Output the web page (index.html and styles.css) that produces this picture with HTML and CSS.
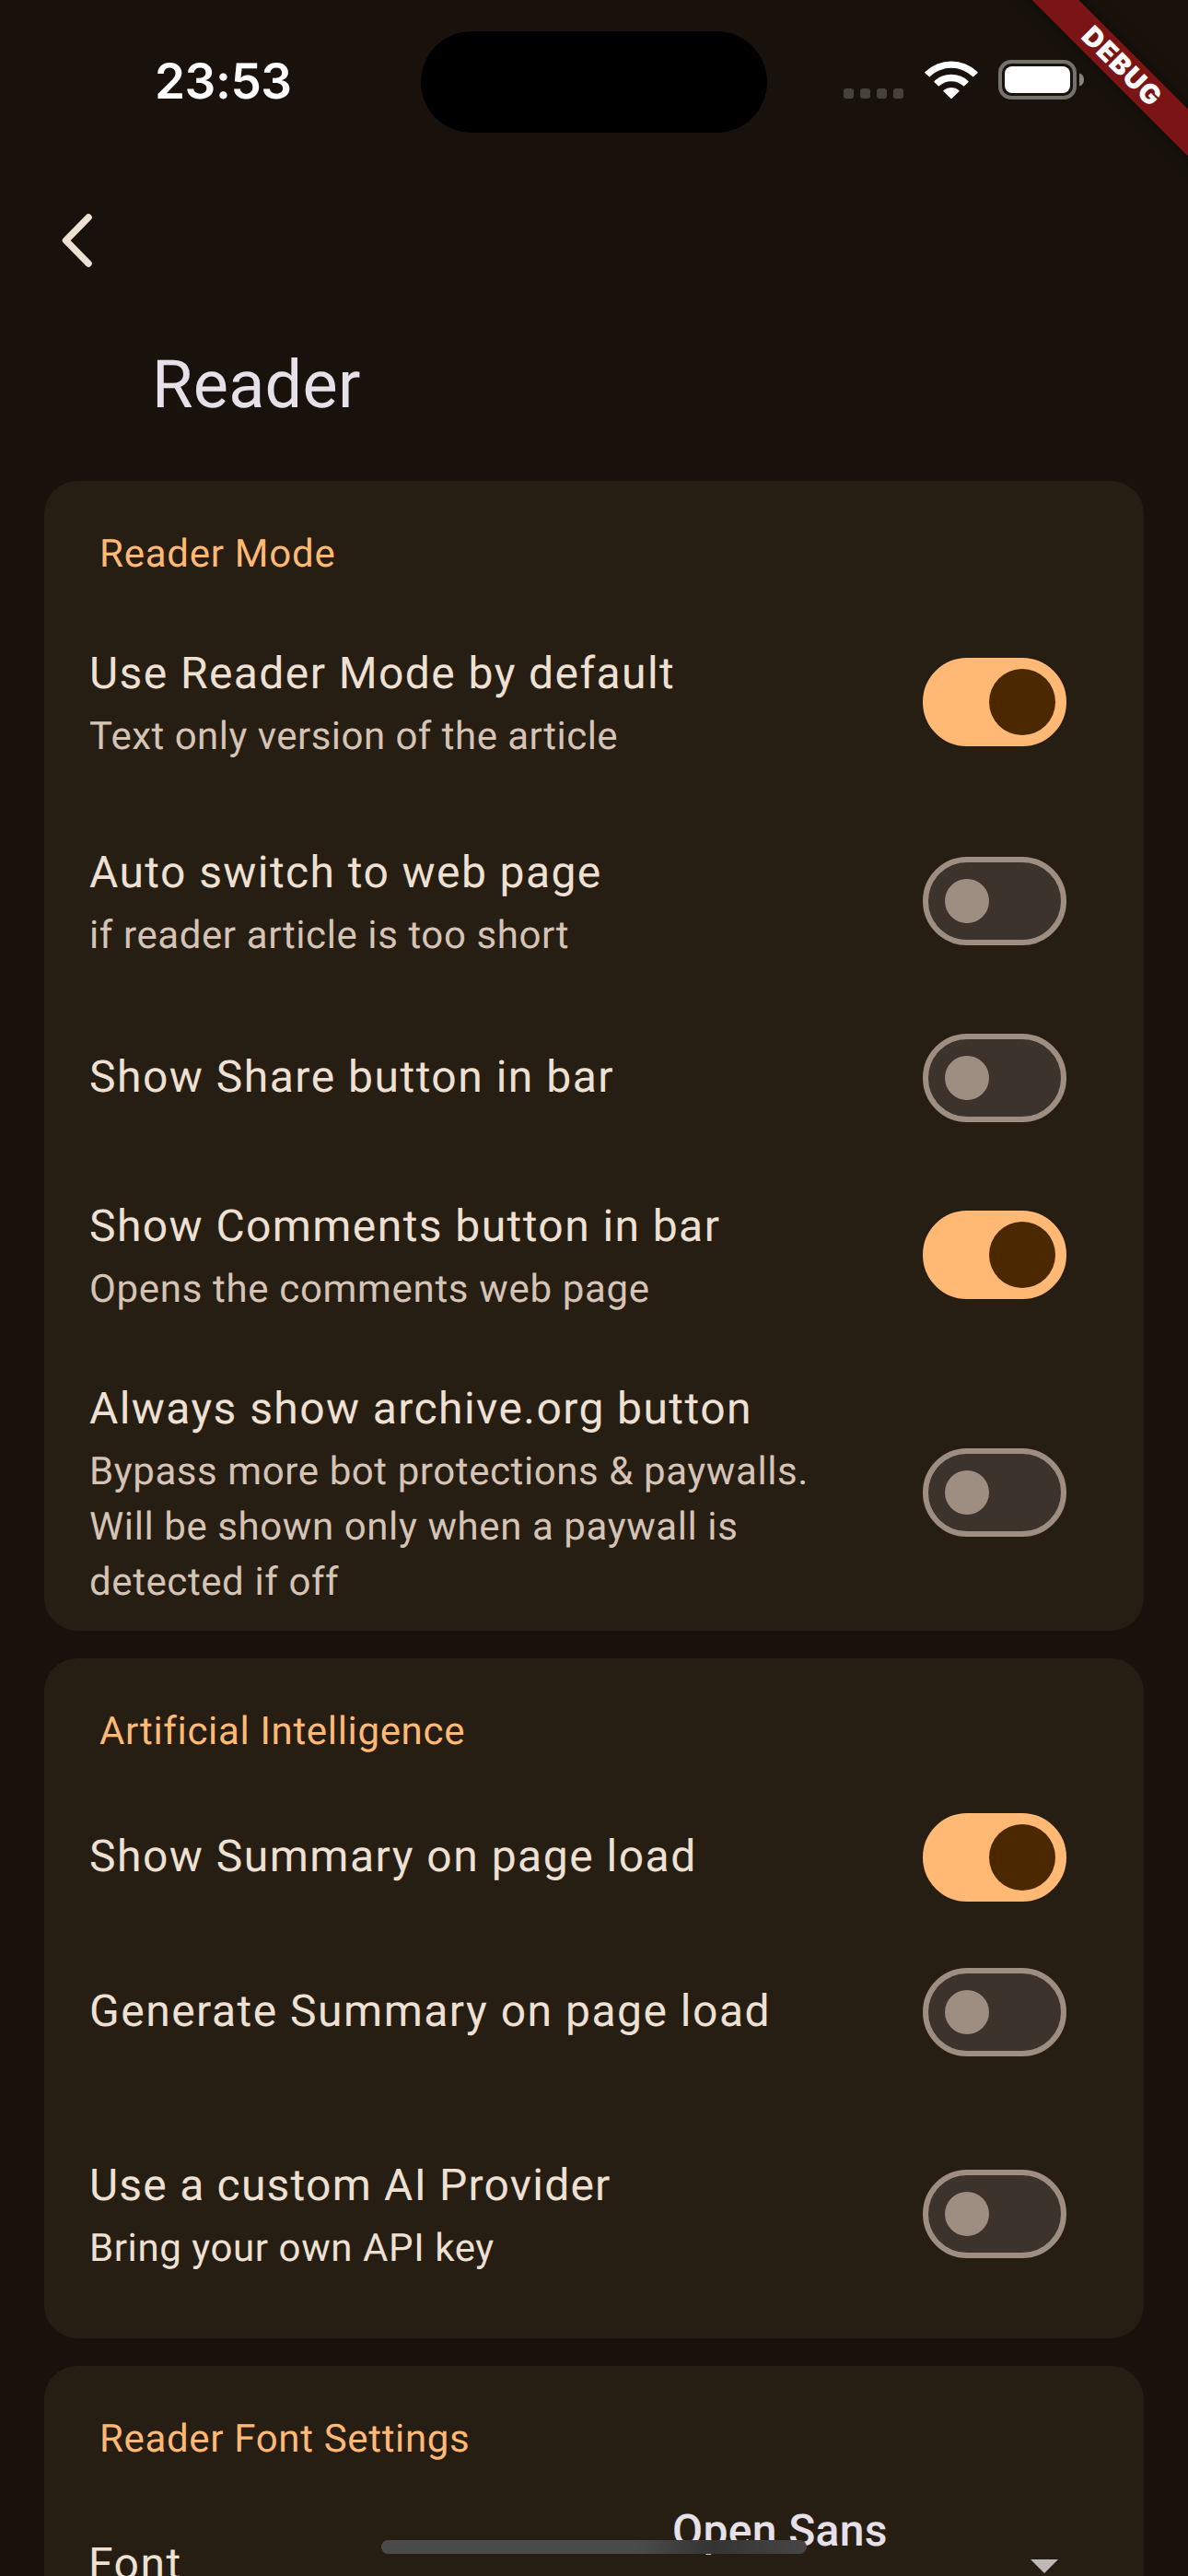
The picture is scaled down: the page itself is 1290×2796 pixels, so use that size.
FILE: index.html
```html
<!DOCTYPE html>
<html lang="en">
<head>
<meta charset="utf-8">
<title>Reader</title>
<link rel="stylesheet" href="styles.css">
</head>
<body>
<div class="screen">
  <header class="status">
    <div class="time">23:53</div>
    <div class="island"></div>
    <div class="indicators">
      <div class="cell"><i></i><i></i><i></i><i></i></div>
      <svg class="wifi" width="58" height="43" viewBox="0 0 58 43" fill="#fff">
        <path d="M0.4 14.2Q0 13.5 .6 12.9A41 41 0 0 1 57.4 12.9Q58 13.5 57.5 14.2L53 18.2Q52.500 18.600 52 18.100A33 33 0 0 0 6 18.100Q5.500 18.600 5 18.200Z"/>
        <path d="M10.600 24.200Q10 23.500 10.600 22.900A27 27 0 0 1 47.400 22.900Q48 23.500 47.400 24.200L43 28.400Q42.500 28.800 42 28.300A19 19 0 0 0 16 28.300Q15.500 28.800 15 28.400Z"/>
        <path d="M20.600 34.300Q20 33.600 20.600 33A13 13 0 0 1 37.400 33Q38 33.600 37.400 34.300L29.700 41.800Q29 42.400 28.300 41.800Z"/>
      </svg>
      <svg class="battery" width="94" height="43" viewBox="0 0 94 43">
        <rect x="2" y="2" width="81" height="39" rx="12" fill="none" stroke="#75716d" stroke-width="4"/>
        <rect x="7" y="7" width="71" height="29" rx="8" fill="#fff"/>
        <path d="M88 14.500Q93 16 93 21.500Q93 27 88 28.500Z" fill="#898581"/>
      </svg>
    </div>
  </header>
  <nav class="nav">
    <svg class="back" width="72" height="72" viewBox="0 0 72 72" fill="none" stroke="#efe0d4" stroke-width="7.500" stroke-linecap="round" stroke-linejoin="round">
      <path d="M48 11L23.500 36L48 61"/>
    </svg>
  </nav>
  <h1 class="title">Reader</h1>
  <main class="cards">
    <section class="card">
      <h2>Reader Mode</h2>
      <div class="row two"><div class="text"><p class="snug">Use Reader Mode by default</p><small class="tighter">Text only version of the article</small></div><span class="switch on"></span></div>
      <div class="row two"><div class="text"><p class="snug">Auto switch to web page</p><small class="tight">if reader article is too short</small></div><span class="switch"></span></div>
      <div class="row"><div class="text"><p>Show Share button in bar</p></div><span class="switch"></span></div>
      <div class="row two"><div class="text"><p class="snug">Show Comments button in bar</p><small class="snug">Opens the comments web page</small></div><span class="switch on"></span></div>
      <div class="row tall"><div class="text"><p class="snug">Always show archive.org button</p><small class="tight">Bypass more bot protections &amp; paywalls. Will be shown only when a paywall is detected if off</small></div><span class="switch"></span></div>
    </section>
    <section class="card">
      <h2 class="snug">Artificial Intelligence</h2>
      <div class="row"><div class="text"><p>Show Summary on page load</p></div><span class="switch on"></span></div>
      <div class="row"><div class="text"><p>Generate Summary on page load</p></div><span class="switch"></span></div>
      <div class="row provider"><div class="text"><p class="tighter">Use a custom AI Provider</p><small class="tight">Bring your own API key</small></div><span class="switch"></span></div>
    </section>
    <section class="card">
      <h2 class="snug">Reader Font Settings</h2>
      <div class="font-row">
        <p>Font</p>
        <div class="select"><span>Open Sans</span><svg width="30" height="15" viewBox="0 0 30 15"><path d="M0 0H30L15 15Z" fill="#bdb9b6"/></svg></div>
      </div>
    </section>
  </main>
  <div class="home"></div>
  <div class="ribbon">DEBUG</div>
</div>
</body>
</html>
```
FILE: styles.css
```css
* { box-sizing: border-box; margin: 0; padding: 0; }
body { background: #19120c; }
.screen {
  --trim: 0px;
  position: relative;
  width: 1290px;
  height: 2796px;
  overflow: hidden;
  background: #19120c;
  color: #efe0d4;
  font-family: Roboto, sans-serif;
  font-kerning: normal;
  text-rendering: geometricPrecision;
}
.snug { --trim: 0.08px; }
.tight { --trim: 0.16px; }
.tighter { --trim: 0.28px; }
.status {
  display: grid;
  grid-template-columns: 457px 376px 1fr;
  height: 177px;
  padding-top: 34px;
}
.time {
  padding-left: 168px;
  color: #fff;
  font: 600 53px/108px Inter, sans-serif;
  letter-spacing: -0.4px;
}
.island { height: 110px; border-radius: 55px; background: #000; }
.indicators { display: flex; align-items: flex-start; padding: 31px 0 0 83px; }
.cell { display: flex; gap: 7px; width: 88px; padding-top: 31px; }
.cell i { width: 11px; height: 11px; border-radius: 3px; background: #47413c; }
.battery { margin-left: 22px; }
.nav { height: 168px; padding: 48px 0 0 48px; }
.back { display: block; }
.title {
  height: 177px;
  padding: 25px 0 0 165px;
  color: #e6e0e9;
  font-size: 72px;
  font-weight: 400;
  line-height: 96px;
  letter-spacing: 0.3px;
}
.cards { display: flex; flex-direction: column; gap: 30px; padding: 0 48px; }
.card { flex: none; border-radius: 36px; background: #261d13; }
.card h2 {
  height: 132px;
  padding: 50px 0 0 60px;
  color: #ffb974;
  font-size: 42px;
  font-weight: 400;
  line-height: 60px;
  letter-spacing: calc(0.75px - var(--trim));
}
.row {
  display: flex;
  align-items: center;
  justify-content: space-between;
  height: 168px;
  padding: 0 84px 0 49px;
}
.row.two { height: 216px; }
.row.tall { height: 300px; }
.row.provider { height: 270px; }
.text { width: 810px; }
.text p, .font-row p { font-size: 48px; line-height: 72px; letter-spacing: calc(1.5px - var(--trim)); }
.text p:last-child { line-height: 70px; margin-bottom: 2px; }
.text p:not(:last-child) { line-height: 70px; margin-bottom: 4px; }
.text small { display: block; margin-bottom: -2px; color: #d5c3b5; font-size: 42px; line-height: 60px; letter-spacing: calc(0.75px - var(--trim)); }
.provider small { color: #efe0d4; }
.switch {
  display: flex;
  align-items: center;
  width: 156px;
  height: 96px;
  padding-left: 18px;
  border: 6px solid #9e8e81;
  border-radius: 48px;
  background: #3c332d;
}
.switch::before { content: ""; width: 48px; height: 48px; border-radius: 50%; background: #9e8e81; }
.switch.on { padding-left: 66px; border-color: #ffb974; background: #ffb974; }
.switch.on::before { width: 72px; height: 72px; background: #4b2800; }
.font-row {
  display: flex;
  justify-content: space-between;
  height: 168px;
  padding: 47px 93px 0 48px;
}
.select {
  display: flex;
  justify-content: space-between;
  width: 419px;
  color: #e6e0e9;
  font-size: 48px;
  font-weight: 500;
  line-height: 72px;
  letter-spacing: 0.35px;
  margin-top: -36px;
}
.select svg { margin-top: 67px; }
.home {
  position: absolute;
  left: 414px;
  top: 2757px;
  width: 462px;
  height: 15px;
  border-radius: 8px;
  background: linear-gradient(90deg, #4b4b4b 60%, #343434 78%, #464646);
}
.ribbon {
  position: absolute;
  left: 1068px;
  top: 54px;
  width: 300px;
  height: 36px;
  padding-left: 1px;
  transform: rotate(45deg);
  background: #7b1515;
  box-shadow: 0 0 18px rgba(0, 0, 0, 0.5);
  color: #fff;
  font-family: Inter, sans-serif;
  font-size: 29.5px;
  font-weight: 900;
  line-height: 36px;
  letter-spacing: 1.2px;
  text-align: center;
}
```
